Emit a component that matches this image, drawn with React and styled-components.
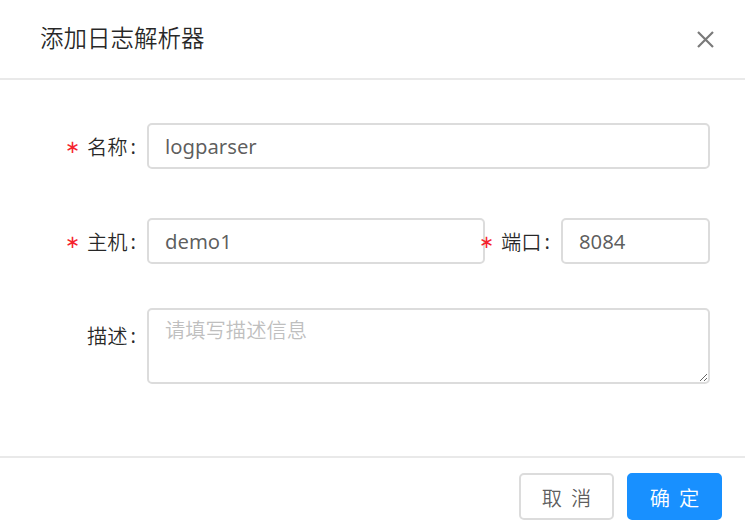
import React from "react";
import styled, { createGlobalStyle } from "styled-components";

const GlobalStyle = createGlobalStyle`
  html, body {
    margin: 0;
    padding: 0;
    background: #fff;
  }
  body {
    font-family: "Noto Sans", "Noto Sans CJK SC", sans-serif;
  }
  * {
    box-sizing: border-box;
  }
`;

const Modal = styled.div`
  width: 745px;
  height: 531px;
  display: flex;
  flex-direction: column;
  background: #fff;
  overflow: hidden;
`;

const Header = styled.div`
  height: 80px;
  flex: none;
  display: flex;
  align-items: center;
  justify-content: space-between;
  padding-left: 40px;
  border-bottom: 2px solid #e9e9e9;
`;

const Title = styled.div`
  font-size: 23.5px;
  font-weight: 350;
  color: rgba(0, 0, 0, 0.85);
  margin-top: -4px;
`;

const CloseButton = styled.button`
  width: 80px;
  height: 78px;
  border: none;
  background: none;
  padding: 0;
  display: flex;
  align-items: center;
  justify-content: center;
  cursor: pointer;
  margin-top: 1px;
`;

const Body = styled.div`
  flex: 1;
  padding: 43px 35px 0 0;
`;

const Row = styled.div`
  display: flex;
  align-items: ${(p) => (p.$top ? "flex-start" : "center")};
  margin-bottom: ${(p) => p.$gap || 0}px;
`;

const Label = styled.label`
  flex: none;
  width: ${(p) => p.$width}px;
  display: flex;
  align-items: center;
  justify-content: flex-end;
  padding-right: 11px;
  font-size: 20.3px;
  font-weight: 350;
  color: rgba(0, 0, 0, 0.85);
  white-space: nowrap;
  padding-top: ${(p) => (p.$top ? 12 : 0)}px;
`;

const Required = styled.span`
  color: #f5222d;
  font-family: "DejaVu Sans", sans-serif;
  font-size: 18px;
  font-weight: 400;
  margin-right: 7px;
`;

const Colon = styled.span`
  margin-left: 3px;
  font-family: "Noto Sans", sans-serif;
  font-weight: 400;
`;

const Input = styled.input`
  height: 46px;
  width: ${(p) => (p.$width ? `${p.$width}px` : "auto")};
  flex: ${(p) => (p.$width ? "none" : 1)};
  min-width: 0;
  border: 2px solid #dcdcdc;
  border-radius: 5px;
  padding: 0 16px;
  font-family: "Noto Sans", "Noto Sans CJK SC", sans-serif;
  font-size: 20.3px;
  color: rgba(0, 0, 0, 0.65);
  outline: none;
  background: #fff;
`;

const TextArea = styled.textarea`
  flex: 1;
  height: 76px;
  border: 2px solid #dcdcdc;
  border-radius: 5px;
  padding: 5px 16px;
  font-family: "Noto Sans", "Noto Sans CJK SC", sans-serif;
  font-size: 20.3px;
  font-weight: 350;
  line-height: 1.57;
  color: rgba(0, 0, 0, 0.65);
  outline: none;
  resize: vertical;

  &::placeholder {
    color: #bfbfbf;
  }
`;

const Footer = styled.div`
  flex: none;
  height: 75px;
  border-top: 2px solid #e9e9e9;
  display: flex;
  justify-content: flex-end;
  align-items: flex-start;
  gap: 13px;
  padding: 15px 23px 0 0;
`;

const Button = styled.button`
  width: 95px;
  height: 47px;
  border-radius: 5px;
  border: 2px solid ${(p) => (p.$primary ? "#1890ff" : "#dcdcdc")};
  background: ${(p) => (p.$primary ? "#1890ff" : "#fff")};
  color: ${(p) => (p.$primary ? "#fff" : "rgba(0, 0, 0, 0.65)")};
  font-family: "Noto Sans CJK SC", sans-serif;
  font-size: 20.3px;
  font-weight: 350;
  cursor: pointer;
  padding: 0;

  span {
    letter-spacing: 9px;
    margin-right: -9px;
  }
`;

export default function App() {
  return (
    <>
      <GlobalStyle />
      <Modal>
        <Header>
          <Title>添加日志解析器</Title>
          <CloseButton aria-label="关闭">
            <svg width="17" height="17" viewBox="0 0 17 17">
              <path d="M1 1L16 16M16 1L1 16" stroke="#7a7a7a" strokeWidth="2.2" />
            </svg>
          </CloseButton>
        </Header>
        <Body>
          <Row $gap={49}>
            <Label $width={147}>
              <Required>∗</Required>名称<Colon>:</Colon>
            </Label>
            <Input defaultValue="logparser" />
          </Row>
          <Row $gap={44}>
            <Label $width={147}>
              <Required>∗</Required>主机<Colon>:</Colon>
            </Label>
            <Input defaultValue="demo1" $width={338} />
            <Label $width={76}>
              <Required>∗</Required>端口<Colon>:</Colon>
            </Label>
            <Input defaultValue="8084" />
          </Row>
          <Row $top>
            <Label $width={147} $top>
              描述<Colon>:</Colon>
            </Label>
            <TextArea placeholder="请填写描述信息" />
          </Row>
        </Body>
        <Footer>
          <Button>
            <span>取消</span>
          </Button>
          <Button $primary>
            <span>确定</span>
          </Button>
        </Footer>
      </Modal>
    </>
  );
}
